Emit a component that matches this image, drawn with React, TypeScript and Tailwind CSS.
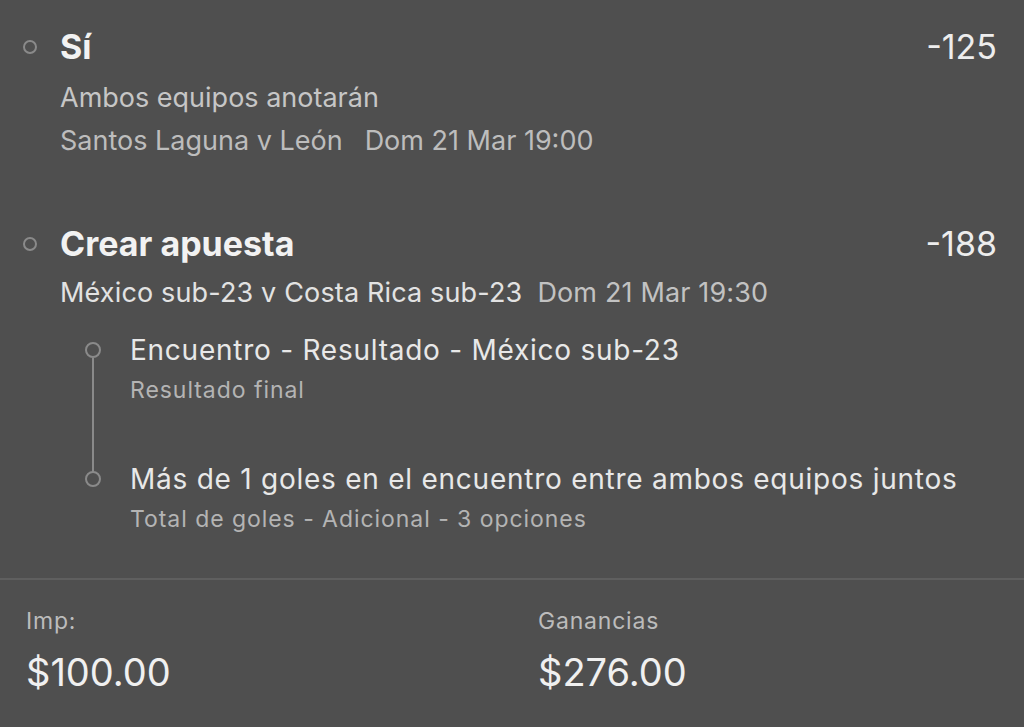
type Leg = { title: string; sub: string };

const legs: Leg[] = [
  { title: "Encuentro - Resultado - México sub-23", sub: "Resultado final" },
  { title: "Más de 1 goles en el encuentro entre ambos equipos juntos", sub: "Total de goles - Adicional - 3 opciones" },
];

function Dot({ size = 14 }: { size?: number }) {
  return (
    <span
      className="block rounded-full border-2 border-[#8a8a8a] box-border"
      style={{ width: size, height: size }}
    />
  );
}

function BetHeader({ title, odds }: { title: string; odds: string }) {
  return (
    <div className="flex items-center leading-[40px]">
      <div className="w-[60px] flex justify-center">
        <Dot />
      </div>
      <div className="flex-1 text-[34px] font-bold text-[#f2f2f2]">{title}</div>
      <div className="text-[34px] text-[#ededed] pr-[27px]">{odds}</div>
    </div>
  );
}

export default function App() {
  return (
    <div
      className="w-[1024px] h-[727px] bg-[#4f4f4f] overflow-hidden flex flex-col"
      style={{ fontFamily: "Inter, 'Noto Sans', sans-serif" }}
    >
      <div className="pt-[27px]">
        <BetHeader title="Sí" odds="-125" />
        <div className="pl-[60px] mt-[11px] leading-[40px] text-[27px] text-[#c6c6c6]">Ambos equipos anotarán</div>
        <div className="pl-[60px] mt-[3px] leading-[40px] text-[27px] text-[#bdbdbd] flex gap-[22px]">
          <span>Santos Laguna v León</span>
          <span>Dom 21 Mar 19:00</span>
        </div>
      </div>

      <div className="mt-[63px]">
        <BetHeader title="Crear apuesta" odds="-188" />
        <div className="pl-[60px] mt-[9px] leading-[40px] text-[27px] tracking-[0.15px] flex gap-[15px]">
          <span className="text-[#e2e2e2]">México sub-23 v Costa Rica sub-23</span>
          <span className="text-[#c2c2c2]">Dom 21 Mar 19:30</span>
        </div>

        <div className="relative ml-[60px] mt-[17px] flex flex-col gap-[49px]">
          <span className="absolute left-[32px] top-[28px] h-[114px] w-[2px] bg-[#8a8a8a]" />
          {legs.map((leg) => (
            <div key={leg.title} className="flex">
              <div className="w-[66px] h-[40px] flex items-center justify-center">
                <Dot size={16} />
              </div>
              <div className="ml-[4px]">
                <div className="leading-[40px] text-[28px] tracking-[0.75px] text-[#e8e8e8]">{leg.title}</div>
                <div className="leading-[40px] text-[23px] tracking-[0.95px] text-[#b4b4b4]">{leg.sub}</div>
              </div>
            </div>
          ))}
        </div>
      </div>

      <div className="mt-[39px] border-t-2 border-[#5f5f5f] flex pt-[21px]">
        <div className="w-[512px] pl-[26px]">
          <div className="leading-[40px] text-[23px] tracking-[0.8px] text-[#bcbcbc]">Imp:</div>
          <div className="mt-[6px] leading-[50px] text-[38px] text-[#f0f0f0]">$100.00</div>
        </div>
        <div className="pl-[26px]">
          <div className="leading-[40px] text-[23px] tracking-[0.8px] text-[#bcbcbc]">Ganancias</div>
          <div className="mt-[6px] leading-[50px] text-[38px] text-[#f0f0f0]">$276.00</div>
        </div>
      </div>
    </div>
  );
}
